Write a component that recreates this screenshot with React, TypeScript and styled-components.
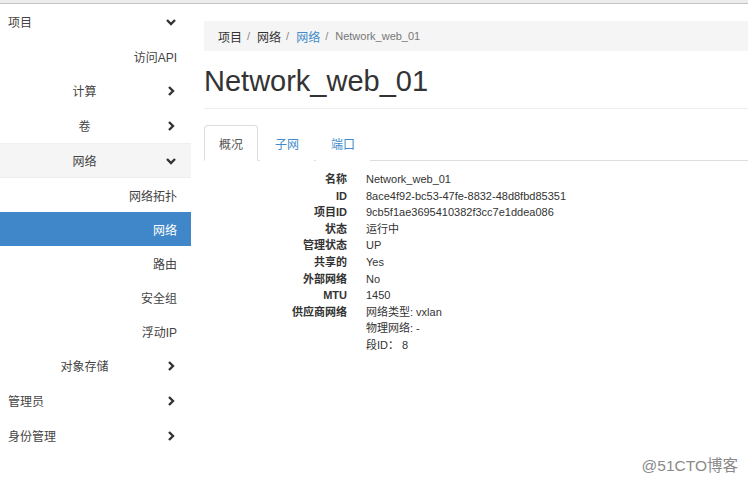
import styled, { createGlobalStyle } from "styled-components"

const GlobalStyle = createGlobalStyle`
  html, body {
    margin: 0;
    padding: 0;
    background: #fff;
  }
  body {
    font-family: "Liberation Sans", "Noto Sans CJK SC", Arial, sans-serif;
    color: #333;
    width: 748px;
    height: 483px;
    overflow: hidden;
  }
`

type Level = 1 | 2 | 3
type Arrow = "down" | "right" | undefined

const navItems: { label: string; level: Level; arrow?: Arrow; open?: boolean; active?: boolean }[] = [
  { label: "项目", level: 1, arrow: "down" },
  { label: "访问API", level: 3 },
  { label: "计算", level: 2, arrow: "right" },
  { label: "卷", level: 2, arrow: "right" },
  { label: "网络", level: 2, arrow: "down", open: true },
  { label: "网络拓扑", level: 3 },
  { label: "网络", level: 3, active: true },
  { label: "路由", level: 3 },
  { label: "安全组", level: 3 },
  { label: "浮动IP", level: 3 },
  { label: "对象存储", level: 2, arrow: "right" },
  { label: "管理员", level: 1, arrow: "right" },
  { label: "身份管理", level: 1, arrow: "right" },
]

const details: { label: string; values: string[] }[] = [
  { label: "名称", values: ["Network_web_01"] },
  { label: "ID", values: ["8ace4f92-bc53-47fe-8832-48d8fbd85351"] },
  { label: "项目ID", values: ["9cb5f1ae3695410382f3cc7e1ddea086"] },
  { label: "状态", values: ["运行中"] },
  { label: "管理状态", values: ["UP"] },
  { label: "共享的", values: ["Yes"] },
  { label: "外部网络", values: ["No"] },
  { label: "MTU", values: ["1450"] },
  { label: "供应商网络", values: ["网络类型: vxlan", "物理网络: -", "段ID： 8"] },
]

const Chevron = ({ dir }: { dir: "down" | "right" }) => (
  <svg width="12" height="12" viewBox="0 0 12 12">
    {dir === "down" ? (
      <path d="M2 4 L6 8 L10 4" fill="none" stroke="#333" strokeWidth="2.4" />
    ) : (
      <path d="M4 2 L8 6 L4 10" fill="none" stroke="#333" strokeWidth="2.4" />
    )}
  </svg>
)

const App = () => {
  return (
    <>
      <GlobalStyle />
      <Page>
        <TopBar />
        <Body>
          <Sidebar>
            {navItems.map((item, i) => (
              <NavRow key={i} $level={item.level} $open={item.open} $active={item.active}>
                <NavText $level={item.level}>{item.label}</NavText>
                {item.arrow && (
                  <ArrowBox>
                    <Chevron dir={item.arrow} />
                  </ArrowBox>
                )}
              </NavRow>
            ))}
          </Sidebar>
          <Main>
            <Breadcrumb>
              <Crumb>项目</Crumb>
              <Sep>/</Sep>
              <Crumb>网络</Crumb>
              <Sep>/</Sep>
              <Crumb $link>网络</Crumb>
              <Sep>/</Sep>
              <Crumb $current>Network_web_01</Crumb>
            </Breadcrumb>
            <Header>
              <Title>Network_web_01</Title>
            </Header>
            <Tabs>
              <Tab $active>概况</Tab>
              <Tab>子网</Tab>
              <Tab>端口</Tab>
            </Tabs>
            <DetailList>
              {details.map((d) => (
                <DetailRow key={d.label}>
                  <Dt>{d.label}</Dt>
                  <Dd>
                    {d.values.map((v) => (
                      <div key={v}>{v}</div>
                    ))}
                  </Dd>
                </DetailRow>
              ))}
            </DetailList>
          </Main>
        </Body>
        <Watermark>@51CTO博客</Watermark>
      </Page>
    </>
  )
}

const Page = styled.div`
  position: relative;
  width: 748px;
  height: 483px;
  overflow: hidden;
`

const TopBar = styled.div`
  height: 3px;
  background: #ececec;
  border-bottom: 1px solid #c4c4c4;
`

const Body = styled.div`
  display: flex;
`

const Sidebar = styled.nav`
  width: 191px;
  flex-shrink: 0;
  display: flex;
  flex-direction: column;
`

const NavRow = styled.div<{ $level: Level; $open?: boolean; $active?: boolean }>`
  display: flex;
  align-items: center;
  height: ${(p) => (p.$level === 3 ? "34px" : "35px")};
  box-sizing: border-box;
  font-size: 12px;
  padding-left: ${(p) => (p.$level === 1 ? "8px" : p.$level === 2 ? "12px" : "0")};
  padding-right: 14px;
  color: ${(p) => (p.$active ? "#fff" : "#444")};
  background: ${(p) => (p.$active ? "#3f87c9" : p.$open ? "#f5f5f5" : "transparent")};
  border-top: ${(p) => (p.$open ? "1px solid #efefef" : "none")};
  border-bottom: ${(p) => (p.$open ? "1px solid #efefef" : "none")};
`

const NavText = styled.span<{ $level: Level }>`
  flex: 1;
  text-align: ${(p) => (p.$level === 1 ? "left" : p.$level === 2 ? "center" : "right")};
  padding-right: ${(p) => (p.$level === 3 ? "0" : "0")};
`

const ArrowBox = styled.span`
  width: 20px;
  display: flex;
  justify-content: flex-end;
  align-items: center;
`

const Main = styled.main`
  flex: 1;
  margin-left: 13px;
  padding-top: 17px;
  min-width: 0;
`

const Breadcrumb = styled.div`
  height: 30px;
  box-sizing: border-box;
  background: #f5f5f5;
  padding: 0 14px;
  display: flex;
  align-items: center;
  font-size: 11px;
  white-space: nowrap;
`

const Crumb = styled.span<{ $link?: boolean; $current?: boolean }>`
  color: ${(p) => (p.$link ? "#428bca" : p.$current ? "#777" : "#333")};
  font-size: ${(p) => (p.$current ? "11px" : "12px")};
`

const Sep = styled.span`
  color: #888;
  padding: 0 7px 0 5px;
`

const Header = styled.div`
  margin-top: 14px;
  padding-bottom: 11px;
  border-bottom: 1px solid #eee;
`

const Title = styled.h1`
  margin: 0;
  font-size: 29px;
  font-weight: normal;
  line-height: 32px;
  color: #333;
  white-space: nowrap;
`

const Tabs = styled.div`
  margin-top: 16px;
  display: flex;
  border-bottom: 1px solid #ddd;
`

const Tab = styled.div<{ $active?: boolean }>`
  height: 36px;
  box-sizing: border-box;
  padding: 0 14px;
  margin-right: 2px;
  margin-bottom: -1px;
  display: flex;
  align-items: center;
  font-size: 12px;
  color: ${(p) => (p.$active ? "#555" : "#428bca")};
  background: #fff;
  border: 1px solid ${(p) => (p.$active ? "#ddd" : "transparent")};
  border-bottom-color: ${(p) => (p.$active ? "#fff" : "transparent")};
  border-radius: 4px 4px 0 0;
`

const DetailList = styled.div`
  margin-top: 10px;
  font-size: 11px;
  line-height: 16.6px;
`

const DetailRow = styled.div`
  display: grid;
  grid-template-columns: 143px 1fr;
  column-gap: 19px;
`

const Dt = styled.div`
  text-align: right;
  font-weight: bold;
  color: #333;
`

const Dd = styled.div`
  color: #333;
`

const Watermark = styled.div`
  position: absolute;
  right: 10px;
  bottom: 8px;
  font-size: 15.5px;
  color: #8a8a8a;
  font-family: "Liberation Sans", "Noto Sans CJK SC", sans-serif;
`

export default App
